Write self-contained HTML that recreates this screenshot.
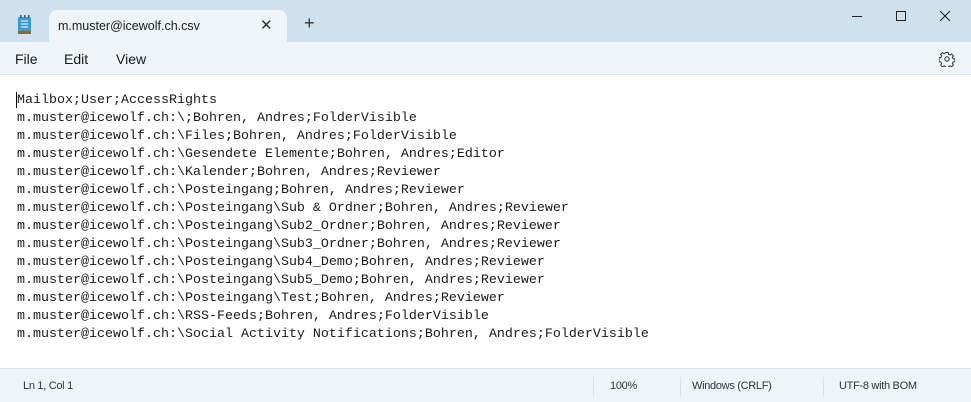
<!DOCTYPE html>
<html><head><style>
html,body{margin:0;padding:0;width:971px;height:401px;overflow:hidden;background:#fff;font-family:"Liberation Sans",sans-serif;}
.title{position:absolute;left:0;top:0;width:971px;height:42px;background:#d0e1ee;}
.tab{position:absolute;left:49px;top:10px;width:238px;height:32px;background:#eff4f9;border-radius:8px 8px 0 0;}
.tab .t{position:absolute;left:9px;top:9px;font-size:12.5px;color:#1a1a1a;}
.tab .x{position:absolute;left:211px;top:6px;font-size:15px;color:#333;}
.plus{position:absolute;left:304px;top:14px;font-size:18px;color:#333;line-height:18px;}
.menu{position:absolute;left:0;top:42px;width:971px;height:32px;background:#eff4f9;border-bottom:1px solid #e3e6ea;}
.menu span{position:absolute;top:9px;font-size:14px;color:#1a1a1a;}
.ed{position:absolute;left:0;top:75px;width:971px;height:293px;background:#fff;}
pre{position:absolute;left:17px;top:92px;margin:0;font-family:"Liberation Mono",monospace;font-size:13.33px;line-height:18px;color:#1a1a1a;}
.caret{position:absolute;left:16px;top:92px;width:1px;height:16px;background:#000;}
.status{position:absolute;left:0;top:368px;width:971px;height:33px;background:#eff4f9;border-top:1px solid #e3e6ea;font-size:11px;color:#333;letter-spacing:-0.3px;}
.status span{position:absolute;top:11px;}
.sep{position:absolute;top:8px;width:1px;height:20px;background:#dde1e5;}
</style></head><body>
<div class="title">
<svg style="position:absolute;left:17px;top:15px" width="16" height="20" viewBox="0 0 16 20"><rect x="1" y="2" width="13" height="17" rx="2" fill="#3a9bd5"/><rect x="1" y="16" width="13" height="3" fill="#8a6a3a"/><g stroke="#fff" stroke-width="1"><line x1="4" y1="6" x2="11" y2="6"/><line x1="4" y1="9" x2="11" y2="9"/><line x1="4" y1="12" x2="11" y2="12"/></g><g fill="#555"><rect x="3" y="0" width="1.5" height="3"/><rect x="7" y="0" width="1.5" height="3"/><rect x="11" y="0" width="1.5" height="3"/></g></svg>
<div class="tab"><span class="t">m.muster@icewolf.ch.csv</span><span class="x">✕</span></div>
<div class="plus">+</div>
<svg style="position:absolute;left:850px;top:9px" width="110" height="14" viewBox="0 0 110 14" fill="none" stroke="#222" stroke-width="1"><line x1="2" y1="7.5" x2="12" y2="7.5"/><rect x="46.5" y="2.5" width="9" height="9"/><path d="M90 2 L100 12 M100 2 L90 12"/></svg>
</div>
<div class="menu"><span style="left:15px">File</span><span style="left:64px">Edit</span><span style="left:116px">View</span>
<svg style="position:absolute;left:939px;top:9px" width="16" height="16" viewBox="0 0 16 16" fill="none" stroke="#333" stroke-width="1"><circle cx="8" cy="8" r="2.2"/><path d="M6.8 1.5h2.4l.4 1.8 1.5.7 1.6-1 1.7 1.7-1 1.6.7 1.5 1.8.4v2.4l-1.8.4-.7 1.5 1 1.6-1.7 1.7-1.6-1-1.5.7-.4 1.8H6.8l-.4-1.8-1.5-.7-1.6 1-1.7-1.7 1-1.6-.7-1.5-1.8-.4V6.8l1.8-.4.7-1.5-1-1.6 1.7-1.7 1.6 1 1.5-.7z"/></svg></div>
<div class="ed"></div>
<pre>Mailbox;User;AccessRights
m.muster@icewolf.ch:\;Bohren, Andres;FolderVisible
m.muster@icewolf.ch:\Files;Bohren, Andres;FolderVisible
m.muster@icewolf.ch:\Gesendete Elemente;Bohren, Andres;Editor
m.muster@icewolf.ch:\Kalender;Bohren, Andres;Reviewer
m.muster@icewolf.ch:\Posteingang;Bohren, Andres;Reviewer
m.muster@icewolf.ch:\Posteingang\Sub &amp; Ordner;Bohren, Andres;Reviewer
m.muster@icewolf.ch:\Posteingang\Sub2_Ordner;Bohren, Andres;Reviewer
m.muster@icewolf.ch:\Posteingang\Sub3_Ordner;Bohren, Andres;Reviewer
m.muster@icewolf.ch:\Posteingang\Sub4_Demo;Bohren, Andres;Reviewer
m.muster@icewolf.ch:\Posteingang\Sub5_Demo;Bohren, Andres;Reviewer
m.muster@icewolf.ch:\Posteingang\Test;Bohren, Andres;Reviewer
m.muster@icewolf.ch:\RSS-Feeds;Bohren, Andres;FolderVisible
m.muster@icewolf.ch:\Social Activity Notifications;Bohren, Andres;FolderVisible</pre>
<div class="caret"></div>
<div class="status"><span style="left:23px">Ln 1, Col 1</span>
<div class="sep" style="left:593px"></div><span style="left:610px">100%</span>
<div class="sep" style="left:680px"></div><span style="left:692px">Windows (CRLF)</span>
<div class="sep" style="left:823px"></div><span style="left:839px">UTF-8 with BOM</span></div>
</body></html>
